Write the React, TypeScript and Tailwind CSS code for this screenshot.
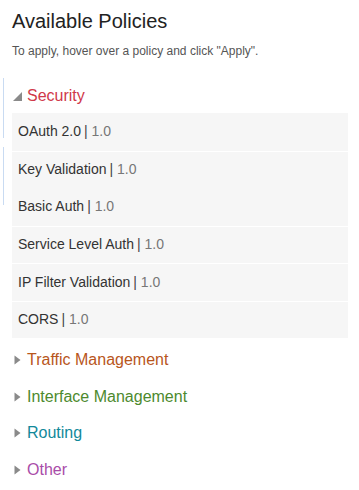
import type { ReactNode } from 'react'

interface Policy {
  name: string
  version: string
  divider: boolean
}

const SECURITY: Policy[] = [
  { name: 'OAuth 2.0', version: '1.0', divider: false },
  { name: 'Key Validation', version: '1.0', divider: true },
  { name: 'Basic Auth', version: '1.0', divider: false },
  { name: 'Service Level Auth', version: '1.0', divider: true },
  { name: 'IP Filter Validation', version: '1.0', divider: true },
  { name: 'CORS', version: '1.0', divider: true },
]

const COLLAPSED = [
  { label: 'Traffic Management', color: 'text-[#b8561c]' },
  { label: 'Interface Management', color: 'text-[#4d8a2e]' },
  { label: 'Routing', color: 'text-[#12899a]' },
  { label: 'Other', color: 'text-[#a94ca8]' },
]

function Caret({ open }: { open: boolean }) {
  // expanded = corner triangle, collapsed = right-pointing
  return open ? (
    <svg width="9" height="9" viewBox="0 0 9 9" className="shrink-0">
      <path d="M9 0 L9 9 L0 9 Z" fill="#8a8a8a" />
    </svg>
  ) : (
    <svg width="7" height="10" viewBox="0 0 7 10" className="shrink-0">
      <path d="M0.5 0.5 L6.5 5 L0.5 9.5 Z" fill="#8a8a8a" />
    </svg>
  )
}

function Category({ open, color, children }: { open: boolean; color: string; children: ReactNode }) {
  return (
    <div className="flex items-center h-[36.5px] pl-[13px]">
      <span className={open ? 'w-[14px] flex items-center' : 'w-[14px] flex items-center pl-[1px]'}>
        <Caret open={open} />
      </span>
      <span className={`text-[16px] leading-none ${color}`}>{children}</span>
    </div>
  )
}

export default function App() {
  return (
    <div
      className="relative w-[359px] h-[490px] bg-white overflow-hidden"
      style={{ fontFamily: '"Liberation Sans", Arial, sans-serif' }}
    >
      {/* focus marks on the left edge */}
      <div className="absolute left-[3px] top-[78px] h-[60px] w-px bg-[#c9dbf2]" />
      <div className="absolute left-[3px] top-[147px] h-[58px] w-px bg-[#c9dbf2]" />

      <div className="px-[12px] pt-[9px]">
        <h1 className="text-[20px] leading-[24px] text-[#222]">Available Policies</h1>
        <p className="mt-[11px] text-[12px] leading-[14px] text-[#555]">
          To apply, hover over a policy and click "Apply".
        </p>
      </div>

      <div className="mt-[19px]">
        <div className="pt-[1px]">
          <Category open color="text-[#d0384a]">Security</Category>
        </div>
        <div className="ml-[12px] mr-[11px] bg-[#f6f6f6] mt-[-1.5px]">
          {SECURITY.map((p, i) => (
            <div
              key={p.name}
              className={`h-[37.5px] flex items-center pl-[6px] text-[14px] ${i > 0 && p.divider ? 'border-t border-white' : ''}`}
            >
              <span className="text-[#333]">{p.name}</span>
              <span className="text-[#777] ml-[3px]">
                <span className="text-[#444]">|</span> {p.version}
              </span>
            </div>
          ))}
        </div>
        <div className="mt-[4px]">
          {COLLAPSED.map(c => (
            <Category key={c.label} open={false} color={c.color}>
              {c.label}
            </Category>
          ))}
        </div>
      </div>
    </div>
  )
}
